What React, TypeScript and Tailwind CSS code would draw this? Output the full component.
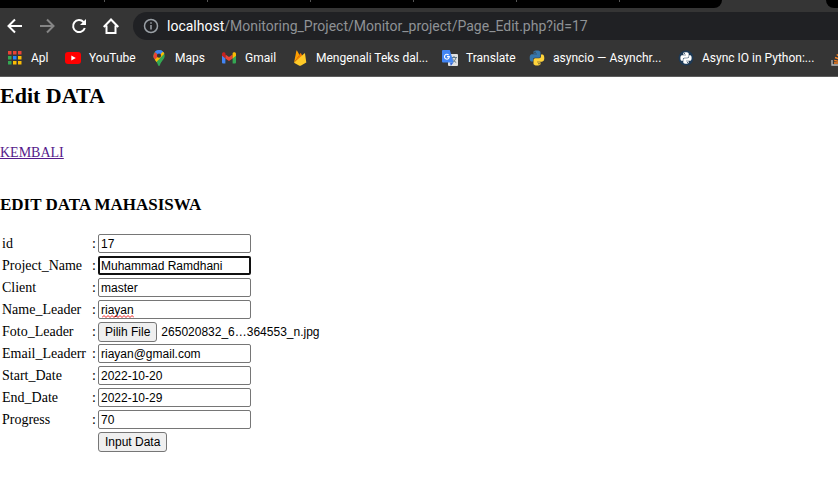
import { useRef } from 'react';
import type { ReactNode } from 'react';

const iconClass = 'h-4 w-4 shrink-0';

function AppsIcon() {
  const colors = ['#ea4335', '#ea4335', '#ea4335', '#34a853', '#2684fc', '#fbbc04', '#34a853', '#fbbc04', '#fbbc04'];
  return (
    <svg viewBox="0 0 16 16" className={iconClass} aria-hidden="true">
      {colors.map((color, i) => (
        <rect key={i} x={1 + (i % 3) * 5} y={1 + Math.floor(i / 3) * 5} width="3.5" height="3.5" fill={color} />
      ))}
    </svg>
  );
}

function YouTubeIcon() {
  return (
    <svg viewBox="0 0 16 16" className={iconClass} aria-hidden="true">
      <rect y="2" width="16" height="12" rx="3" fill="#f00" />
      <path d="M6.3 5.5 10.8 8l-4.5 2.5z" fill="#fff" />
    </svg>
  );
}

function MapsIcon() {
  return (
    <svg viewBox="0 0 16 16" className={iconClass} aria-hidden="true">
      <clipPath id="pin">
        <path d="M8 0a5.7 5.7 0 0 0-5.7 5.7c0 3.8 3.8 5.3 4.7 9.4.3 1.2 1.7 1.2 2 0 .9-4.1 4.7-5.6 4.7-9.4A5.7 5.7 0 0 0 8 0z" />
      </clipPath>
      <g clipPath="url(#pin)">
        <path d="M0 0h16v16H0z" fill="#34a853" />
        <path d="M3 0h12L8 6 3.5 2z" fill="#1a73e8" />
        <path d="M8 0h8v4l-4-1-4 3z" fill="#4285f4" />
        <path d="M2 6 4 1.8 8 5.7 4.5 9.8 2 8z" fill="#ea4335" />
        <path d="m2 11.5 6-6 4-4L14 3 4.5 13z" fill="#fbbc04" />
        <path d="M3 0h9.5L8.5 5.2 4 2z" fill="#4285f4" />
      </g>
      <circle cx="8" cy="5.7" r="2.1" fill="#353535" />
    </svg>
  );
}

function GmailIcon() {
  return (
    <svg viewBox="0 0 16 16" className={iconClass} aria-hidden="true">
      <path d="M1 4.2 4.4 6.8V13.5H2a1 1 0 0 1-1-1z" fill="#4285f4" />
      <path d="m15 4.2-3.4 2.6v6.7H14a1 1 0 0 0 1-1z" fill="#34a853" />
      <path d="M4.4 4.4 8 7.1l3.6-2.7v4L8 11.1 4.4 8.4z" fill="#ea4335" />
      <path d="M1 4.2c0-1.8 1.8-2.3 3-1.4l.4.3v5.3L1 5.8z" fill="#c5221f" />
      <path d="M15 4.2c0-1.8-1.8-2.3-3-1.4l-.4.3v5.3L15 5.8z" fill="#fbbc04" />
    </svg>
  );
}

function FirebaseIcon() {
  return (
    <svg viewBox="0 0 16 16" className={iconClass} aria-hidden="true">
      <path d="M2 12.7 4.4.8c.1-.4.5-.4.7-.1l2.4 4.4z" fill="#ffa000" />
      <path d="m2 12.7 6.3-9.3c.2-.4.6-.4.8 0L11 7z" fill="#f57c00" />
      <path d="m2 12.7 10.3-9.3c.3-.3.7-.1.7.2l1.3 9-5.6 3.1c-.4.2-.9.2-1.3 0z" fill="#ffca28" />
    </svg>
  );
}

function TranslateIcon() {
  return (
    <svg viewBox="0 0 16 16" className={iconClass} aria-hidden="true">
      <rect x="6" y="4" width="10" height="12" rx="1" fill="#e0e0e0" />
      <path d="M9 7.5h6M12 6v1.5M14 7.5c-.4 2.1-1.8 3.8-3.5 4.8M10.5 8.5c.6 1.6 2 3 3.7 4" stroke="#607988" fill="none" />
      <path d="m8 12.5 3.5 0L8.8 16z" fill="#3367d6" />
      <path d="M1 0h6.8l3.8 12.5H1a1 1 0 0 1-1-1V1a1 1 0 0 1 1-1z" fill="#4285f4" />
      <path d="M6.6 5A2.4 2.4 0 1 0 7.3 6.6H5" stroke="#fff" strokeWidth="1.1" fill="none" />
    </svg>
  );
}

const pythonTop =
  'M7.9.5C4.3.5 4.5 2.1 4.5 2.1v1.7H8v.5H3.1S.7 4 .7 7.9s2.1 3.6 2.1 3.6H4V9.8s-.1-2 2-2h3.5s2 0 2-1.9V2.5s.3-2-3.6-2zM6 1.6a.6.6 0 1 1 0 1.3.6.6 0 0 1 0-1.3z';
const pythonBottom =
  'M8.1 15.5c3.6 0 3.4-1.6 3.4-1.6v-1.7H8v-.5h4.9s2.4.3 2.4-3.6-2.1-3.6-2.1-3.6H12v1.7s.1 2-2 2H6.5s-2 0-2 1.9v3.4s-.3 2 3.6 2zm1.9-1.1a.6.6 0 1 1 0-1.3.6.6 0 0 1 0 1.3z';

function PythonIcon() {
  return (
    <svg viewBox="0 0 16 16" className={iconClass} aria-hidden="true">
      <path d={pythonTop} fill="#3776ab" />
      <path d={pythonBottom} fill="#ffd43b" />
    </svg>
  );
}

function RealPythonIcon() {
  return (
    <svg viewBox="0 0 16 16" className={iconClass} aria-hidden="true">
      <circle cx="8" cy="8" r="7.5" fill="#1e3a56" />
      <g transform="translate(1.8 1.8) scale(.775)" fill="#fff">
        <path d={pythonTop} />
        <path d={pythonBottom} />
      </g>
    </svg>
  );
}

function StackIcon() {
  return (
    <svg viewBox="0 0 16 16" className={iconClass} aria-hidden="true">
      <path d="M2 10v5h10v-5" stroke="#bcbbbb" strokeWidth="1.3" fill="none" />
      <path d="M4 13h6.5M4.2 10.5l6.3 1M5 7.5l6 2.2M6.7 4.5l5.2 3.7M9.5 1.5l3.7 5" stroke="#f48024" strokeWidth="1.4" />
    </svg>
  );
}

const bookmarks: { label: string; icon: ReactNode; width: string }[] = [
  { label: 'Apl', icon: <AppsIcon />, width: 'w-[58px]' },
  { label: 'YouTube', icon: <YouTubeIcon />, width: 'w-[86px]' },
  { label: 'Maps', icon: <MapsIcon />, width: 'w-[70px]' },
  { label: 'Gmail', icon: <GmailIcon />, width: 'w-[71px]' },
  { label: 'Mengenali Teks dal...', icon: <FirebaseIcon />, width: 'w-[150px]' },
  { label: 'Translate', icon: <TranslateIcon />, width: 'w-[87px]' },
  { label: 'asyncio — Asynchr...', icon: <PythonIcon />, width: 'w-[149px]' },
  { label: 'Async IO in Python:...', icon: <RealPythonIcon />, width: 'w-[152px]' },
  { label: '', icon: <StackIcon />, width: 'w-4' },
];

function NavButton({ label, children, dim = false }: { label: string; children: ReactNode; dim?: boolean }) {
  return (
    <button type="button" aria-label={label} className={dim ? 'text-[#858585]' : 'text-white'}>
      <svg viewBox="0 0 16 16" className="h-4 w-4" fill="none" stroke="currentColor" strokeWidth="2" aria-hidden="true">
        {children}
      </svg>
    </button>
  );
}

function BrowserBar() {
  return (
    <header className="overflow-hidden border-b border-[#5c5c5c] bg-[#353535] font-[Roboto,sans-serif]">
      <div className="flex h-2 bg-[#353535]">
        <div className="flex w-[722px] shrink-0 rounded-br-lg bg-black pl-[104px]">
          {[0, 1, 2, 3, 4, 5].map((tab) => (
            <span key={tab} className="h-0.5 w-[103px] shrink-0 border-l border-[#555]" />
          ))}
        </div>
        <div className="w-[104px] shrink-0" />
        <div className="min-w-3 flex-1 rounded-bl-lg bg-black" />
      </div>
      <div className="mt-1 flex h-7 items-center">
        <div className="flex w-[133px] shrink-0 gap-4 pl-[7px]">
          <NavButton label="Back">
            <path d="M15 8H2M8 1.5 1.5 8 8 14.5" />
          </NavButton>
          <NavButton label="Forward" dim>
            <path d="M1 8h13M8 1.5 14.5 8 8 14.5" />
          </NavButton>
          <NavButton label="Reload">
            <path d="M13.8 10A6 6 0 1 1 12.5 4l1.5 1.5" />
            <path d="M15 1v6H9z" fill="currentColor" stroke="none" />
          </NavButton>
          <NavButton label="Home">
            <path d="M.7 9 8 1.5 15.3 9M3.5 7.5V15h9V7.5" />
          </NavButton>
        </div>
        <div className="flex h-7 flex-1 items-center gap-2 rounded-l-full bg-[#202124] pl-[10px]">
          <svg viewBox="0 0 16 16" className={iconClass} fill="none" stroke="#9aa0a6" strokeWidth="1.5" aria-hidden="true">
            <circle cx="8" cy="8" r="6.5" />
            <path d="M8 7v4.5M8 4.2v1.6" />
          </svg>
          <p className="text-sm whitespace-nowrap text-[#8f9296]">
            <span className="text-white">localhost</span>/Monitoring_Project/Monitor_project/Page_Edit.php?id=17
          </p>
        </div>
      </div>
      <nav aria-label="Bookmarks" className="flex h-9 items-center pl-[7px]">
        {bookmarks.map((bookmark, i) => (
          <a
            key={i}
            href="#"
            aria-label={bookmark.label || 'Stack Overflow'}
            className={`flex shrink-0 items-center gap-2 text-xs whitespace-nowrap text-white ${bookmark.width}`}
          >
            {bookmark.icon}
            {bookmark.label}
          </a>
        ))}
      </nav>
    </header>
  );
}

const inputClass =
  'h-[19px] w-[153px] rounded-xs bg-white font-[\'Liberation_Sans\',Arial,sans-serif] text-xs leading-[17px] text-black outline-none';
const plainInput = 'border border-[#767676] px-0.5';
const activeInput = 'border-2 border-[#101010] px-px';
const buttonClass =
  'h-5 rounded-[3px] border border-[#767676] bg-[#efefef] px-1.5 font-[\'Liberation_Sans\',Arial,sans-serif] text-xs leading-4 text-black';

function SpellingMark() {
  return (
    <svg
      viewBox="0 0 32 3"
      className="pointer-events-none absolute top-[15px] left-1 h-[3px] w-8"
      fill="none"
      stroke="#f02020"
      aria-hidden="true"
    >
      <path d="M0 2.5 2 .5l2 2 2-2 2 2 2-2 2 2 2-2 2 2 2-2 2 2 2-2 2 2 2-2 2 2 2-2 2 2" />
    </svg>
  );
}

function Row({ id, label, children }: { id: string; label: string; children: ReactNode }) {
  return (
    <div className="flex h-5 items-start leading-5">
      <label htmlFor={id} className="w-[90px] shrink-0">
        {label}
      </label>
      <span className="w-1.5 shrink-0">:</span>
      {children}
    </div>
  );
}

type TextRowProps = { id: string; label: string; value: string; active?: boolean; misspelled?: boolean };

function TextRow({ id, label, value, active = false, misspelled = false }: TextRowProps) {
  return (
    <Row id={id} label={label}>
      <div className="relative flex">
        <input
          id={id}
          name={id}
          type="text"
          defaultValue={value}
          spellCheck={false}
          className={`${inputClass} ${active ? activeInput : plainInput}`}
        />
        {misspelled && <SpellingMark />}
      </div>
    </Row>
  );
}

export default function App() {
  const fileInput = useRef<HTMLInputElement>(null);
  return (
    <div className="min-h-screen bg-white">
      <BrowserBar />
      <main className="font-['Liberation_Serif','Times_New_Roman',serif] text-sm leading-4 text-black">
        <h2 className="pt-[7px] text-[22px] leading-6 font-bold">Edit DATA</h2>
        <a href="#" className="mt-[37px] inline-block text-[#551a8b] underline">
          KEMBALI
        </a>
        <h3 className="mt-[34px] text-[17px] leading-5 font-bold">EDIT DATA MAHASISWA</h3>
        <form className="mt-[19px] flex flex-col gap-0.5 pl-0.5" onSubmit={(e) => e.preventDefault()}>
          <TextRow id="id" label="id" value="17" />
          <TextRow id="project" label="Project_Name" value="Muhammad Ramdhani" active />
          <TextRow id="client" label="Client" value="master" />
          <TextRow id="leader" label="Name_Leader" value="riayan" misspelled />
          <Row id="photo" label="Foto_Leader">
            <input ref={fileInput} id="photo" name="photo" type="file" className="hidden" />
            <button type="button" className={buttonClass} onClick={() => fileInput.current?.click()}>
              Pilih File
            </button>
            <span className="ml-1 font-['Liberation_Sans',Arial,sans-serif] text-xs leading-5">
              265020832_6…364553_n.jpg
            </span>
          </Row>
          <TextRow id="email" label="Email_Leaderr" value="riayan@gmail.com" />
          <TextRow id="start" label="Start_Date" value="2022-10-20" />
          <TextRow id="end" label="End_Date" value="2022-10-29" />
          <TextRow id="progress" label="Progress" value="70" />
          <div className="flex pl-24">
            <button type="submit" className={buttonClass}>
              Input Data
            </button>
          </div>
        </form>
      </main>
    </div>
  );
}
